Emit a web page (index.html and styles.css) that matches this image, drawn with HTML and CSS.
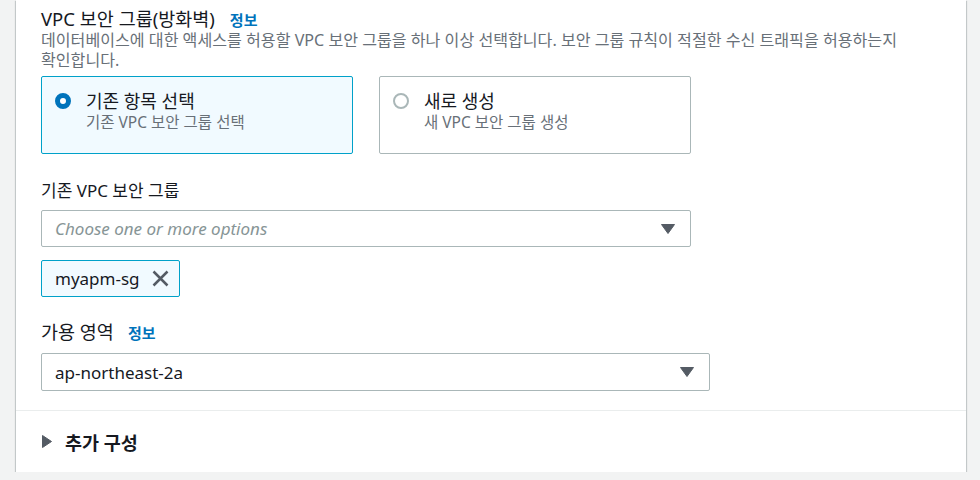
FILE: index.html
```html
<!DOCTYPE html>
<html lang="ko">
<head>
<meta charset="utf-8">
<title>VPC 보안 그룹</title>
<link rel="stylesheet" href="styles.css">
</head>
<body>
<section class="card">
  <div class="card-body">
    <div class="field">
      <div class="label-row label-row-heading">
        <span class="label heading">VPC 보안 그룹(방화벽)</span>
        <a class="info" href="#">정보</a>
      </div>
      <p class="desc">데이터베이스에 대한 액세스를 허용할 VPC 보안 그룹을 하나 이상 선택합니다. 보안 그룹 규칙이 적절한 수신 트래픽을 허용하는지 확인합니다.</p>
      <div class="tiles">
        <div class="tile selected">
          <span class="radio on"></span>
          <span class="tile-text">
            <span class="tile-title">기존 항목 선택</span>
            <span class="tile-sub">기존 VPC 보안 그룹 선택</span>
          </span>
        </div>
        <div class="tile">
          <span class="radio"></span>
          <span class="tile-text">
            <span class="tile-title">새로 생성</span>
            <span class="tile-sub">새 VPC 보안 그룹 생성</span>
          </span>
        </div>
      </div>
    </div>

    <div class="field field-sg">
      <div class="label-row"><span class="label">기존 VPC 보안 그룹</span></div>
      <div class="select select-sg">
        <span class="placeholder">Choose one or more options</span>
        <svg class="caret" width="14" height="10" viewBox="0 0 14 10"><polygon points="0.5,0.5 13.5,0.5 7,9.5" fill="#545b64" stroke="#545b64" stroke-linejoin="round"/></svg>
      </div>
      <div class="tokens">
        <div class="token">
          <span class="token-text">myapm-sg</span>
          <svg class="token-x" width="17" height="17" viewBox="0 0 17 17"><path d="M1.5 1.5 L15.5 15.5 M15.5 1.5 L1.5 15.5" stroke="#545b64" stroke-width="2.5" fill="none"/></svg>
        </div>
      </div>
    </div>

    <div class="field field-az">
      <div class="label-row">
        <span class="label label-az">가용 영역</span>
        <a class="info" href="#">정보</a>
      </div>
      <div class="select select-az">
        <span class="value">ap-northeast-2a</span>
        <svg class="caret" width="14" height="10" viewBox="0 0 14 10"><polygon points="0.5,0.5 13.5,0.5 7,9.5" fill="#545b64" stroke="#545b64" stroke-linejoin="round"/></svg>
      </div>
    </div>
  </div>

  <div class="card-footer">
    <div class="expander">
      <svg class="expand-icon" width="10" height="13" viewBox="0 0 10 13"><polygon points="0.5,0.5 9.5,6.5 0.5,12.5" fill="#545b64" stroke="#545b64" stroke-linejoin="round"/></svg>
      <span class="expand-title">추가 구성</span>
    </div>
  </div>
</section>
</body>
</html>
```

FILE: styles.css
```css
* { box-sizing: border-box; }

html, body {
  margin: 0;
  padding: 0;
  background: #f2f3f3;
}

body {
  font-family: "Noto Sans", "Noto Sans CJK KR", sans-serif;
  font-feature-settings: "palt";
  color: #16191f;
  word-break: keep-all;
}

.card {
  margin: 0 14px 0 16px;
  width: 950px;
  height: 472px;
  background: #ffffff;
  box-shadow: 0 1px 1px 0 rgba(0, 28, 36, 0.3), 1px 1px 1px 0 rgba(0, 28, 36, 0.15), -1px 1px 1px 0 rgba(0, 28, 36, 0.15);
  display: flex;
  flex-direction: column;
}

.card-body {
  padding: 7px 25px 19px 25px;
}

.field-sg {
  margin-top: 25px;
  width: 650px;
}

.field-az {
  margin-top: 23px;
  width: 669px;
}

.label-row {
  display: flex;
  align-items: baseline;
  gap: 14px;
  height: 24px;
  line-height: 24px;
}

.label-row-heading {
  gap: 15px;
  height: 23px;
  line-height: 23px;
}

.label {
  font-size: 17px;
  color: #16191f;
}

.label-az {
  font-size: 18.5px;
}

.heading {
  font-size: 18.5px;
}

.info {
  font-size: 15px;
  font-weight: 700;
  color: #0073bb;
  text-decoration: none;
}

.desc {
  margin: 0;
  font-size: 16.1px;
  line-height: 20px;
  color: #687078;
}

.tiles {
  margin-top: 6px;
  width: 650px;
  display: flex;
  gap: 26px;
}

.tile {
  flex: 1;
  height: 78px;
  border: 1px solid #aab7b8;
  border-radius: 2px;
  background: #ffffff;
  padding: 13px 13px 0 13px;
  display: flex;
  align-items: flex-start;
  gap: 15px;
}

.tile.selected {
  background: #f1faff;
  border-color: #00a1c9;
}

.radio {
  flex: none;
  width: 16px;
  height: 16px;
  margin-top: 3px;
  border-radius: 50%;
  border: 2px solid #aab7b8;
  background: #ffffff;
}

.radio.on {
  border: 5px solid #0073bb;
}

.tile-text {
  display: flex;
  flex-direction: column;
}

.tile-title {
  font-size: 18px;
  line-height: 22px;
  color: #16191f;
}

.tile-sub {
  font-size: 15.5px;
  line-height: 20px;
  color: #687078;
}

.select {
  margin-top: 7px;
  height: 37px;
  border: 1px solid #aab7b8;
  border-radius: 2px;
  background: #ffffff;
  display: flex;
  align-items: center;
  justify-content: space-between;
  padding: 0 15px 0 13px;
  font-size: 17px;
}

.select-az {
  margin-top: 9px;
  height: 38px;
}

.placeholder {
  font-style: italic;
  color: #879596;
}

.value {
  color: #16191f;
}

.caret {
  display: block;
  flex: none;
}

.tokens {
  margin-top: 13px;
  display: flex;
}

.token {
  height: 37px;
  border: 1px solid #00a1c9;
  border-radius: 2px;
  background: #f1faff;
  display: flex;
  align-items: center;
  gap: 12px;
  padding: 0 10px 0 13px;
  font-size: 17px;
}

.token-x {
  display: block;
}

.card-footer {
  border-top: 1px solid #eaeded;
  flex: 1;
  display: flex;
  align-items: center;
  padding: 0 26px;
}

.expander {
  display: flex;
  align-items: center;
  gap: 13px;
}

.expand-icon {
  display: block;
}

.expand-title {
  font-size: 18.5px;
  font-weight: 700;
  color: #16191f;
}
```
